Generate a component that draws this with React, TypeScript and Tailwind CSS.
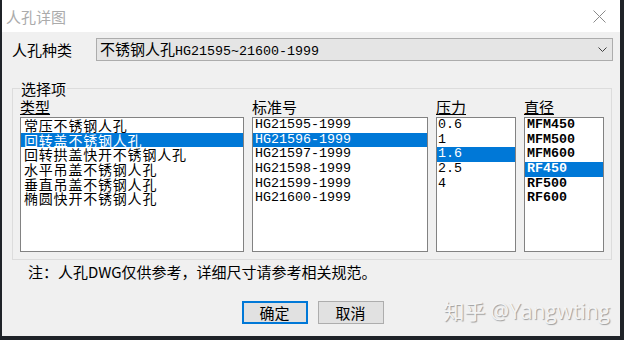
import React from 'react'

const types = ['常压不锈钢人孔', '回转盖不锈钢人孔', '回转拱盖快开不锈钢人孔', '水平吊盖不锈钢人孔', '垂直吊盖不锈钢人孔', '椭圆快开不锈钢人孔']
const standards = ['HG21595-1999', 'HG21596-1999', 'HG21597-1999', 'HG21598-1999', 'HG21599-1999', 'HG21600-1999']
const pressures = ['0.6', '1', '1.6', '2.5', '4']
const diameters = ['MFM450', 'MFM500', 'MFM600', 'RF450', 'RF500', 'RF600']

function ListBox({
  items,
  selected,
  className,
  itemClass,
}: {
  items: string[]
  selected: number
  className: string
  itemClass: string
}) {
  return (
    <div className={`h-[135px] overflow-hidden border border-[#828282] bg-white ${className}`}>
      {items.map((item, i) => (
        <div
          key={item}
          className={`h-[14.7px] whitespace-nowrap leading-[14.7px] ${itemClass} ${
            i === selected ? 'bg-[#0078d7] text-white' : 'text-black'
          }`}
        >
          {item}
        </div>
      ))}
    </div>
  )
}

export default function App() {
  return (
    <div className="flex h-[340px] w-[624px] bg-[#1f2328] pb-[4px] pl-[2px] pr-[4px] font-['Noto_Sans_CJK_SC',sans-serif]">
      <div className="relative flex h-[336px] w-[618px] flex-col bg-[#f0f0f0]">
        {/* title bar */}
        <div className="flex h-[32px] items-center justify-between bg-white pl-[4px] pr-[14px]">
          <span className="text-[15px] leading-[15px] text-[#ababab]">人孔详图</span>
          <svg width="13" height="13" viewBox="0 0 13 13" className="text-[#8a8a8a]">
            <path d="M0.5 0.5 L12.5 12.5 M12.5 0.5 L0.5 12.5" stroke="currentColor" strokeWidth="1" />
          </svg>
        </div>

        {/* manhole type */}
        <div className="mt-[6px] flex items-center pl-[10px] pr-[7px]">
          <span className="w-[84px] text-[15px] leading-[15px] text-black">人孔种类</span>
          <div className="flex h-[23px] flex-1 items-center justify-between border border-[#acacac] bg-[#e5e5e5] pl-[3px] pr-[5px]">
            <span className="text-[15px] leading-[15px] text-black">
              不锈钢人孔<span className="font-['Liberation_Mono',monospace] text-[13.33px]">HG21595~21600-1999</span>
            </span>
            <svg width="9" height="5" viewBox="0 0 9 5" className="text-[#404040]">
              <path d="M0.5 0.5 L4.5 4.5 L8.5 0.5" stroke="currentColor" fill="none" strokeWidth="1" />
            </svg>
          </div>
        </div>

        {/* options group */}
        <fieldset className="ml-[10px] mr-[8px] mt-[20px] border border-[#dcdcdc] pb-[7px] pl-[7px] pr-[7px]">
          <legend className="ml-0 px-[1px] text-[15px] leading-[15px] text-black">选择项</legend>
          <div className="mt-[3px] flex gap-[8px] text-[15px]">
            <div className="flex flex-col">
              <span className="h-[15px] leading-[15px] text-black underline decoration-1 underline-offset-[1px]">类型</span>
              <ListBox
                items={types}
                selected={1}
                className="mt-[3px] w-[224px]"
                itemClass="pl-[3px] text-[14px] tracking-[0.8px]"
              />
            </div>
            <div className="flex flex-col">
              <span className="h-[15px] leading-[15px] text-black">标准号</span>
              <ListBox
                items={standards}
                selected={1}
                className="mt-[3px] w-[176px]"
                itemClass="pl-[2px] font-['Liberation_Mono',monospace] text-[13.33px]"
              />
            </div>
            <div className="flex flex-col">
              <span className="h-[15px] leading-[15px] text-black underline decoration-1 underline-offset-[1px]">压力</span>
              <ListBox
                items={pressures}
                selected={2}
                className="mt-[3px] w-[80px]"
                itemClass="pl-[1px] font-['Liberation_Mono',monospace] text-[13.33px]"
              />
            </div>
            <div className="flex flex-col">
              <span className="h-[15px] leading-[15px] text-black underline decoration-1 underline-offset-[1px]">直径</span>
              <ListBox
                items={diameters}
                selected={3}
                className="mt-[3px] w-[80px]"
                itemClass="pl-[2px] font-['Liberation_Mono',monospace] text-[13.33px] font-bold"
              />
            </div>
          </div>
        </fieldset>

        {/* note */}
        <p className="mt-[4px] pl-[26px] text-[15px] leading-[15px] text-black">注：人孔DWG仅供参考，详细尺寸请参考相关规范。</p>

        {/* buttons */}
        <div className="mt-[22px] flex justify-center gap-[10px] pl-[3px]">
          <button className="h-[23px] w-[66px] border-2 border-[#0078d7] bg-[#e1e1e1] text-[15px] leading-[15px] text-black">确定</button>
          <button className="h-[23px] w-[66px] border border-[#adadad] bg-[#e1e1e1] text-[15px] leading-[15px] text-black">取消</button>
        </div>

        {/* watermark */}
        <span className="absolute bottom-[14px] right-[10px] text-[21px] leading-[21px] text-[#f4f4f4] [text-shadow:1px_1px_1px_rgba(0,0,0,0.35)]">
          知乎 <span className="font-['Open_Sans',sans-serif]">@Yangwting</span>
        </span>
      </div>
    </div>
  )
}
